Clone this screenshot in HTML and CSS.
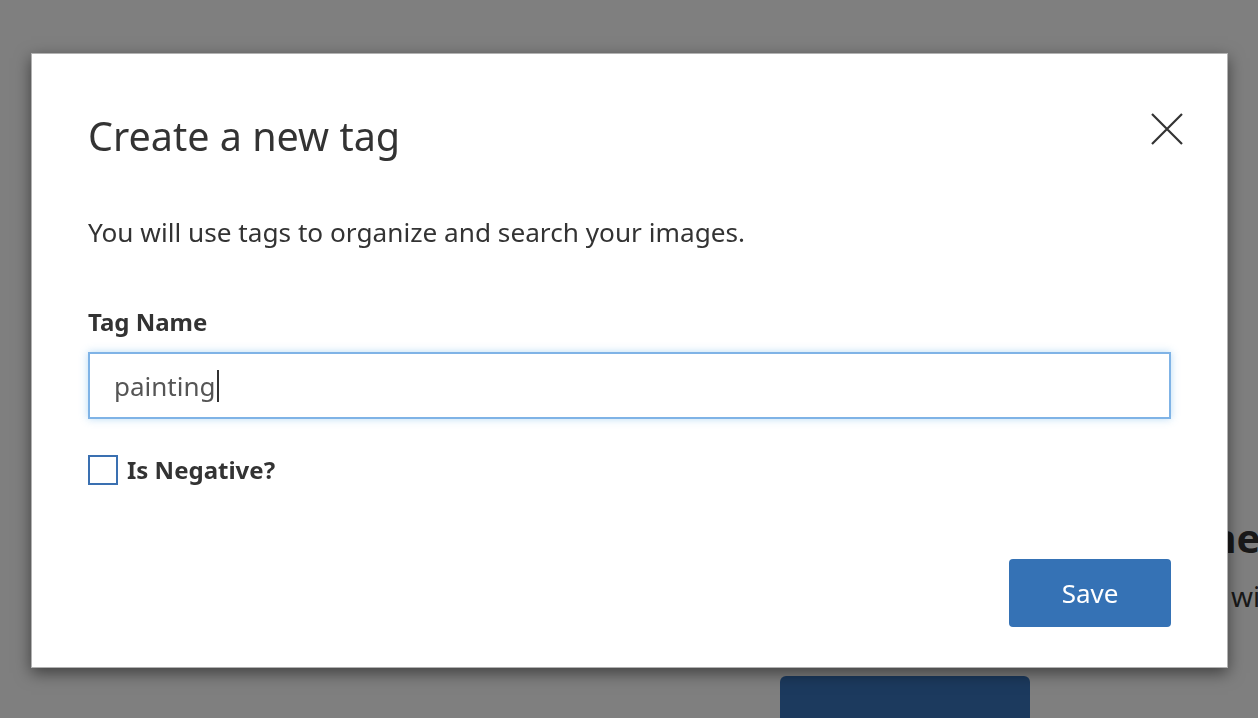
FILE: index.html
```html
<!DOCTYPE html>
<html>
<head>
<meta charset="utf-8">
<link rel="stylesheet" href="styles.css">
</head>
<body>
<div class="page">
  <div class="bg-column">
    <h2 class="bg-heading">Define new tags</h2>
    <p class="bg-text">with tags</p>
    <div class="bg-button"></div>
  </div>
</div>
<div class="backdrop"></div>
<div class="modal">
  <div class="modal-header">
    <h1 class="modal-title">Create a new tag</h1>
    <button class="close" aria-label="Close">
      <svg width="34" height="34" viewBox="0 0 34 34"><path d="M2 2 L32 32 M32 2 L2 32" stroke="#333" stroke-width="2.2" fill="none"/></svg>
    </button>
  </div>
  <p class="intro">You will use tags to organize and search your images.</p>
  <label class="field-label">Tag Name</label>
  <div class="input"><span class="value">painting</span><span class="caret"></span></div>
  <div class="check-row">
    <span class="checkbox"></span>
    <span class="check-label">Is Negative?</span>
  </div>
  <div class="footer">
    <button class="save">Save</button>
  </div>
</div>
</body>
</html>
```
FILE: styles.css
```css
html, body {
  margin: 0;
  padding: 0;
  width: 1258px;
  height: 718px;
  overflow: hidden;
  background: #fff;
  font-family: "Noto Sans", "Open Sans", sans-serif;
  color: #333;
}
.page {
  display: flex;
  padding-left: 780px;
  padding-top: 512px;
}
.bg-column {
  display: flex;
  flex-direction: column;
  white-space: nowrap;
}
.bg-heading {
  margin: 0 0 0 350px;
  font-size: 40px;
  font-weight: 700;
  line-height: 52px;
  color: #333;
}
.bg-text {
  margin: 12px 0 0 451px;
  font-size: 28px;
  line-height: 40px;
  color: #333;
}
.bg-button {
  margin-top: 60px;
  width: 250px;
  height: 60px;
  background: #3875bd;
  border-radius: 6px;
}
.backdrop {
  position: fixed;
  inset: 0;
  background: rgba(0, 0, 0, 0.5);
}
.modal {
  position: absolute;
  left: 31px;
  top: 53px;
  width: 1197px;
  height: 615px;
  box-sizing: border-box;
  background: #fff;
  border: 1px solid rgba(0, 0, 0, 0.3);
  box-shadow: 0 5px 15px rgba(0, 0, 0, 0.5);
  padding: 0 56px 0 56px;
  display: flex;
  flex-direction: column;
}
.modal-header {
  display: flex;
  justify-content: space-between;
  align-items: flex-start;
  padding-top: 52px;
}
.modal-title {
  margin: 0;
  font-weight: 400;
  font-size: 39.5px;
  line-height: 60px;
  color: #333;
}
.close {
  border: 0;
  background: none;
  padding: 0;
  margin: 6px -13px 0 0;
  width: 34px;
  height: 34px;
  cursor: pointer;
}
.close svg { display: block; }
.intro {
  margin: 46px 0 0;
  font-size: 26.2px;
  line-height: 40px;
}
.field-label {
  margin-top: 53px;
  font-size: 24px;
  font-weight: 700;
  line-height: 34px;
}
.input {
  margin-top: 13px;
  height: 67px;
  box-sizing: border-box;
  border: 2px solid #7fb3e6;
  box-shadow: 0 0 8px rgba(102, 175, 233, 0.45);
  display: flex;
  align-items: center;
  padding-left: 24px;
  font-size: 26px;
  color: #555;
}
.caret {
  width: 2px;
  height: 32px;
  background: #333;
  margin-left: 1px;
}
.check-row {
  margin-top: 34px;
  display: flex;
  align-items: center;
  gap: 9px;
}
.checkbox {
  width: 30px;
  height: 30px;
  box-sizing: border-box;
  border: 2px solid #3a70b1;
  background: #fff;
}
.check-label {
  font-size: 24px;
  font-weight: 700;
  line-height: 34px;
}
.footer {
  display: flex;
  justify-content: flex-end;
  margin-top: 72px;
}
.save {
  width: 162px;
  height: 68px;
  border: 0;
  border-radius: 4px;
  background: #3572b5;
  color: #fff;
  font-family: "Noto Sans", "Open Sans", sans-serif;
  font-size: 26px;
}
```
